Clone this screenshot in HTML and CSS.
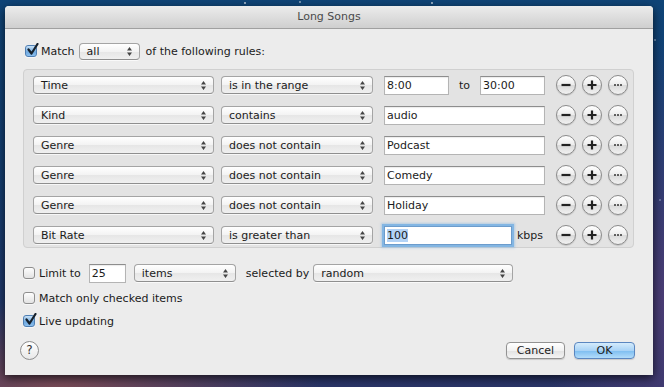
FILE: index.html
```html
<!DOCTYPE html>
<html lang="en">
<head>
    <meta charset="UTF-8">
    <meta name="viewport" content="width=device-width, initial-scale=1.0">
    <title>Long Songs</title>
    <link rel="stylesheet" href="styles.css">
</head>
<body>
    <div class="window">
        <div class="titlebar">Long Songs</div>

        <div class="content">
            <div class="match-row">
                <span class="check on"><svg width="13" height="13" viewBox="0 0 13 13"><path d="M2.5 6.5 L5.5 10.5 L11.5 1" fill="none" stroke="#15202b" stroke-width="2.2" stroke-linecap="round" stroke-linejoin="round"/></svg></span>
                <span class="label match-label">Match</span>
                <div class="popup p-all">all<svg class="arrows" width="5" height="9" viewBox="0 0 5 9"><path d="M0 3.5 L2.5 0 L5 3.5Z M0 5.5 L2.5 9 L5 5.5Z" fill="#444"/></svg></div>
                <span class="label">of the following rules:</span>
            </div>

            <div class="rules">
                <div class="rule">
                    <div class="popup p-field">Time<svg class="arrows" width="5" height="9" viewBox="0 0 5 9"><path d="M0 3.5 L2.5 0 L5 3.5Z M0 5.5 L2.5 9 L5 5.5Z" fill="#444"/></svg></div>
                    <div class="popup p-op">is in the range<svg class="arrows" width="5" height="9" viewBox="0 0 5 9"><path d="M0 3.5 L2.5 0 L5 3.5Z M0 5.5 L2.5 9 L5 5.5Z" fill="#444"/></svg></div>
                    <div class="value">
                        <div class="input short">8:00</div>
                        <span class="to">to</span>
                        <div class="input short">30:00</div>
                    </div>
                    <div class="rbtns">
                        <span class="round"><svg width="20" height="20" viewBox="0 0 20 20"><path d="M5.5 10 H14.5" stroke="#222" stroke-width="2.2"/></svg></span>
                        <span class="round"><svg width="20" height="20" viewBox="0 0 20 20"><path d="M5.5 10 H14.5 M10 5.5 V14.5" stroke="#222" stroke-width="2.2"/></svg></span>
                        <span class="round"><svg width="20" height="20" viewBox="0 0 20 20"><circle cx="7" cy="10" r="1" fill="#333"/><circle cx="10" cy="10" r="1" fill="#333"/><circle cx="13" cy="10" r="1" fill="#333"/></svg></span>
                    </div>
                </div>

                <div class="rule">
                    <div class="popup p-field">Kind<svg class="arrows" width="5" height="9" viewBox="0 0 5 9"><path d="M0 3.5 L2.5 0 L5 3.5Z M0 5.5 L2.5 9 L5 5.5Z" fill="#444"/></svg></div>
                    <div class="popup p-op">contains<svg class="arrows" width="5" height="9" viewBox="0 0 5 9"><path d="M0 3.5 L2.5 0 L5 3.5Z M0 5.5 L2.5 9 L5 5.5Z" fill="#444"/></svg></div>
                    <div class="value">
                        <div class="input long">audio</div>
                    </div>
                    <div class="rbtns">
                        <span class="round"><svg width="20" height="20" viewBox="0 0 20 20"><path d="M5.5 10 H14.5" stroke="#222" stroke-width="2.2"/></svg></span>
                        <span class="round"><svg width="20" height="20" viewBox="0 0 20 20"><path d="M5.5 10 H14.5 M10 5.5 V14.5" stroke="#222" stroke-width="2.2"/></svg></span>
                        <span class="round"><svg width="20" height="20" viewBox="0 0 20 20"><circle cx="7" cy="10" r="1" fill="#333"/><circle cx="10" cy="10" r="1" fill="#333"/><circle cx="13" cy="10" r="1" fill="#333"/></svg></span>
                    </div>
                </div>

                <div class="rule">
                    <div class="popup p-field">Genre<svg class="arrows" width="5" height="9" viewBox="0 0 5 9"><path d="M0 3.5 L2.5 0 L5 3.5Z M0 5.5 L2.5 9 L5 5.5Z" fill="#444"/></svg></div>
                    <div class="popup p-op">does not contain<svg class="arrows" width="5" height="9" viewBox="0 0 5 9"><path d="M0 3.5 L2.5 0 L5 3.5Z M0 5.5 L2.5 9 L5 5.5Z" fill="#444"/></svg></div>
                    <div class="value">
                        <div class="input long">Podcast</div>
                    </div>
                    <div class="rbtns">
                        <span class="round"><svg width="20" height="20" viewBox="0 0 20 20"><path d="M5.5 10 H14.5" stroke="#222" stroke-width="2.2"/></svg></span>
                        <span class="round"><svg width="20" height="20" viewBox="0 0 20 20"><path d="M5.5 10 H14.5 M10 5.5 V14.5" stroke="#222" stroke-width="2.2"/></svg></span>
                        <span class="round"><svg width="20" height="20" viewBox="0 0 20 20"><circle cx="7" cy="10" r="1" fill="#333"/><circle cx="10" cy="10" r="1" fill="#333"/><circle cx="13" cy="10" r="1" fill="#333"/></svg></span>
                    </div>
                </div>

                <div class="rule">
                    <div class="popup p-field">Genre<svg class="arrows" width="5" height="9" viewBox="0 0 5 9"><path d="M0 3.5 L2.5 0 L5 3.5Z M0 5.5 L2.5 9 L5 5.5Z" fill="#444"/></svg></div>
                    <div class="popup p-op">does not contain<svg class="arrows" width="5" height="9" viewBox="0 0 5 9"><path d="M0 3.5 L2.5 0 L5 3.5Z M0 5.5 L2.5 9 L5 5.5Z" fill="#444"/></svg></div>
                    <div class="value">
                        <div class="input long">Comedy</div>
                    </div>
                    <div class="rbtns">
                        <span class="round"><svg width="20" height="20" viewBox="0 0 20 20"><path d="M5.5 10 H14.5" stroke="#222" stroke-width="2.2"/></svg></span>
                        <span class="round"><svg width="20" height="20" viewBox="0 0 20 20"><path d="M5.5 10 H14.5 M10 5.5 V14.5" stroke="#222" stroke-width="2.2"/></svg></span>
                        <span class="round"><svg width="20" height="20" viewBox="0 0 20 20"><circle cx="7" cy="10" r="1" fill="#333"/><circle cx="10" cy="10" r="1" fill="#333"/><circle cx="13" cy="10" r="1" fill="#333"/></svg></span>
                    </div>
                </div>

                <div class="rule">
                    <div class="popup p-field">Genre<svg class="arrows" width="5" height="9" viewBox="0 0 5 9"><path d="M0 3.5 L2.5 0 L5 3.5Z M0 5.5 L2.5 9 L5 5.5Z" fill="#444"/></svg></div>
                    <div class="popup p-op">does not contain<svg class="arrows" width="5" height="9" viewBox="0 0 5 9"><path d="M0 3.5 L2.5 0 L5 3.5Z M0 5.5 L2.5 9 L5 5.5Z" fill="#444"/></svg></div>
                    <div class="value">
                        <div class="input long">Holiday</div>
                    </div>
                    <div class="rbtns">
                        <span class="round"><svg width="20" height="20" viewBox="0 0 20 20"><path d="M5.5 10 H14.5" stroke="#222" stroke-width="2.2"/></svg></span>
                        <span class="round"><svg width="20" height="20" viewBox="0 0 20 20"><path d="M5.5 10 H14.5 M10 5.5 V14.5" stroke="#222" stroke-width="2.2"/></svg></span>
                        <span class="round"><svg width="20" height="20" viewBox="0 0 20 20"><circle cx="7" cy="10" r="1" fill="#333"/><circle cx="10" cy="10" r="1" fill="#333"/><circle cx="13" cy="10" r="1" fill="#333"/></svg></span>
                    </div>
                </div>

                <div class="rule">
                    <div class="popup p-field">Bit Rate<svg class="arrows" width="5" height="9" viewBox="0 0 5 9"><path d="M0 3.5 L2.5 0 L5 3.5Z M0 5.5 L2.5 9 L5 5.5Z" fill="#444"/></svg></div>
                    <div class="popup p-op">is greater than<svg class="arrows" width="5" height="9" viewBox="0 0 5 9"><path d="M0 3.5 L2.5 0 L5 3.5Z M0 5.5 L2.5 9 L5 5.5Z" fill="#444"/></svg></div>
                    <div class="value">
                        <div class="input mid focus"><span class="sel">100</span></div>
                        <span class="unit">kbps</span>
                    </div>
                    <div class="rbtns">
                        <span class="round"><svg width="20" height="20" viewBox="0 0 20 20"><path d="M5.5 10 H14.5" stroke="#222" stroke-width="2.2"/></svg></span>
                        <span class="round"><svg width="20" height="20" viewBox="0 0 20 20"><path d="M5.5 10 H14.5 M10 5.5 V14.5" stroke="#222" stroke-width="2.2"/></svg></span>
                        <span class="round"><svg width="20" height="20" viewBox="0 0 20 20"><circle cx="7" cy="10" r="1" fill="#333"/><circle cx="10" cy="10" r="1" fill="#333"/><circle cx="13" cy="10" r="1" fill="#333"/></svg></span>
                    </div>
                </div>
            </div>

            <div class="limit-row">
                <span class="check"></span>
                <span class="label">Limit to</span>
                <div class="input num">25</div>
                <div class="popup p-items">items<svg class="arrows" width="5" height="9" viewBox="0 0 5 9"><path d="M0 3.5 L2.5 0 L5 3.5Z M0 5.5 L2.5 9 L5 5.5Z" fill="#444"/></svg></div>
                <span class="sel-by">selected by</span>
                <div class="popup p-random">random<svg class="arrows" width="5" height="9" viewBox="0 0 5 9"><path d="M0 3.5 L2.5 0 L5 3.5Z M0 5.5 L2.5 9 L5 5.5Z" fill="#444"/></svg></div>
            </div>

            <div class="opt-row">
                <span class="check"></span>
                <span class="label">Match only checked items</span>
            </div>

            <div class="opt-row">
                <span class="check on"><svg width="13" height="13" viewBox="0 0 13 13"><path d="M2.5 6.5 L5.5 10.5 L11.5 1" fill="none" stroke="#15202b" stroke-width="2.2" stroke-linecap="round" stroke-linejoin="round"/></svg></span>
                <span class="label">Live updating</span>
            </div>

            <div class="bottom-row">
                <span class="help">?</span>
                <div class="actions">
                    <span class="btn">Cancel</span>
                    <span class="btn default">OK</span>
                </div>
            </div>
        </div>
    </div>
</body>
</html>
```

FILE: styles.css
```css
*{
    box-sizing: border-box;
}
body{
    margin: 0;
    height: 387px;
    overflow: hidden;
    font-family: "DejaVu Sans", sans-serif;
    font-size: 11px;
    color: #1b1b1b;
    background:
        radial-gradient(circle at 20px 300px, #fff 0, transparent 1px),
        radial-gradient(circle at 300px 2px, #fff 0, transparent 1.2px),
        radial-gradient(circle at 245px 3px, #fff 0, transparent 1.5px),
        radial-gradient(circle at 432px 3px, #fff 0, transparent 1.5px),
        radial-gradient(circle at 655px 40px, #dfe8ff 0, transparent 1.2px),
        radial-gradient(circle at 660px 200px, #dfe8ff 0, transparent 1px),
        radial-gradient(ellipse 260px 90px at 60px 390px, #7a4a55 0, rgba(122,74,85,0) 100%),
        radial-gradient(ellipse 120px 260px at 664px 300px, #4a3c74 0, rgba(74,60,116,0) 100%),
        linear-gradient(to bottom, #0f4477 0, #153d70 50%, #2a3568 100%);
}
.window{
    margin: 6px 0 0 5px;
    width: 648px;
    height: 369px;
    background: #ececec;
    border-radius: 4px 4px 0 0;
    box-shadow: 0 3px 10px rgba(0,0,0,0.7);
    display: flex;
    flex-direction: column;
}
.titlebar{
    height: 23px;
    line-height: 21px;
    text-align: center;
    color: #4a4a4a;
    font-size: 11px;
    border-radius: 4px 4px 0 0;
    background: linear-gradient(to bottom, #ececec, #cfcfcf);
    border-bottom: 1px solid #a0a0a0;
}
.content{
    padding: 13px 19px 0 18px;
}
.label{
    white-space: nowrap;
}

/* checkboxes */
.check{
    display: inline-flex;
    width: 12px;
    height: 12px;
    border: 1px solid #8e8e8e;
    border-radius: 3px;
    background: linear-gradient(to bottom, #fdfdfd, #e3e3e3);
    box-shadow: 0 1px 0 rgba(255,255,255,0.6);
    flex: none;
    position: relative;
}
.check.on{
    background: linear-gradient(to bottom, #c9e2f8, #6fa9e0 60%, #8cc0ef);
    border-color: #4f7fb3;
}
.check svg{
    position: absolute;
    left: 0;
    top: -3px;
}

/* popups */
.popup{
    display: flex;
    align-items: center;
    justify-content: space-between;
    height: 18px;
    padding: 0 7px 0 7px;
    border: 1px solid #a4a4a4;
    border-bottom-color: #8f8f8f;
    border-radius: 4px;
    background: linear-gradient(to bottom, #ffffff, #f3f3f3 50%, #e6e6e6 51%, #f0f0f0);
    box-shadow: 0 1px 0 rgba(255,255,255,0.7);
    white-space: nowrap;
    flex: none;
}
.arrows{
    flex: none;
}

/* text fields */
.input{
    height: 19px;
    line-height: 17px;
    padding: 0 2px;
    background: #fff;
    border: 1px solid #b4b4b4;
    border-top-color: #8d8d8d;
    box-shadow: inset 0 1px 1px rgba(0,0,0,0.08);
    white-space: nowrap;
    flex: none;
}
.input.focus{
    box-shadow: 0 0 0 2px #83b6e3, 0 0 2px 3px rgba(131,182,227,0.5);
    border-color: #6c9ccc;
}
.sel{
    background: #b3d3f6;
}

.match-row{
    display: flex;
    align-items: center;
    height: 18px;
    padding-left: 2px;
}
.match-label{
    margin-left: 4px;
}
.p-all{
    width: 61px;
    height: 17px;
    margin: 0 6px 0 4px;
    padding-left: 7px;
}

.rules{
    margin-top: 9px;
    height: 179px;
    padding: 5px 0 2px 9px;
    background: #e3e3e3;
    border: 1px solid #d0d0d0;
    border-radius: 4px;
    display: flex;
    flex-direction: column;
    gap: 10px;
}
.rule{
    display: flex;
    align-items: center;
    height: 20px;
}
.p-field{
    width: 181px;
    margin-right: 7px;
}
.p-op{
    width: 152px;
    margin-right: 11px;
}
.value{
    display: flex;
    align-items: center;
    width: 172px;
}
.short{
    width: 65px;
}
.to{
    width: 31px;
    text-align: center;
}
.long{
    width: 161px;
}
.mid{
    width: 128px;
}
.unit{
    margin-left: 5px;
}
.rbtns{
    display: flex;
    gap: 6px;
}
.round{
    display: flex;
    width: 20px;
    height: 20px;
    border-radius: 50%;
    border: 1px solid #8b8b8b;
    background: linear-gradient(to bottom, #ffffff, #ececec 50%, #dadada 52%, #f2f2f2);
    box-shadow: 0 1px 1px rgba(0,0,0,0.15);
}
.round svg{
    margin: -1px;
}

.limit-row{
    display: flex;
    align-items: center;
    height: 20px;
    margin-top: 15px;
}
.limit-row .label{
    margin-left: 4px;
}
.num{
    width: 37px;
    margin-left: 8px;
}
.p-items{
    width: 102px;
    margin-left: 8px;
}
.sel-by{
    white-space: nowrap;
    margin: 0 4px 0 10px;
}
.p-random{
    width: 200px;
}

.opt-row{
    display: flex;
    align-items: center;
    height: 16px;
    margin-top: 7px;
}
.opt-row .label{
    margin-left: 4px;
}

.bottom-row{
    display: flex;
    align-items: center;
    justify-content: space-between;
    height: 20px;
    margin-top: 11px;
}
.help{
    width: 19px;
    height: 19px;
    margin-left: -3px;
    border-radius: 50%;
    border: 1px solid #8d8d8d;
    background: linear-gradient(to bottom, #ffffff, #e8e8e8);
    display: flex;
    align-items: center;
    justify-content: center;
    font-size: 12px;
    color: #333;
}
.actions{
    display: flex;
    gap: 9px;
    margin-right: -1px;
}
.btn{
    width: 59px;
    height: 17px;
    line-height: 15px;
    text-align: center;
    border: 1px solid #929292;
    border-radius: 4px;
    background: linear-gradient(to bottom, #ffffff, #f2f2f2 50%, #e2e2e2 52%, #f4f4f4);
    box-shadow: 0 1px 1px rgba(0,0,0,0.15);
}
.btn.default{
    width: 61px;
    border-color: #5a86c0;
    background: linear-gradient(to bottom, #d4ebfc, #a9d3f6 50%, #7dbdf0 52%, #b2dcfa);
}
```
